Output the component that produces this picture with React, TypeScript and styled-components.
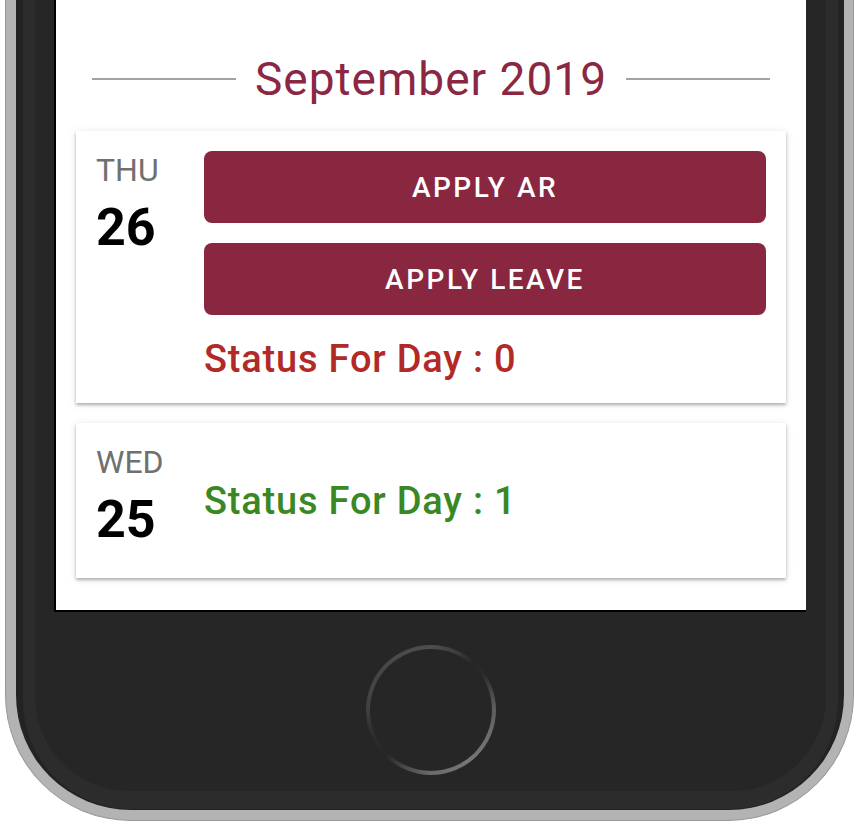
import React from "react";
import styled, { createGlobalStyle } from "styled-components";

const GlobalStyle = createGlobalStyle`
  html, body {
    margin: 0;
    padding: 0;
    background: #ffffff;
    font-family: Roboto, "Liberation Sans", Arial, sans-serif;
  }
  * { box-sizing: border-box; }
`;

const Shell = styled.div`
  margin: 0 2px 0 5px;
  background: #b3b3b3;
  border: 1px solid #979797;
  border-top: none;
  border-radius: 0 0 126px 126px;
  padding: 0 9px 10px 10px;
`;

const Body = styled.div`
  background: #232323;
  border-radius: 0 0 115px 115px;
  padding: 0 6px 1px 7px;
`;

const Bezel = styled.div`
  background: #2c2c2c;
  border-radius: 0 0 108px 108px;
  padding: 0 12px 18px 12px;
`;

const Inner = styled.div`
  background: #262626;
  border-radius: 0 0 94px 94px;
  display: flex;
  flex-direction: column;
`;

const Screen = styled.div`
  margin: 0 20px 0 19px;
  background: #ffffff;
  border-left: 2px solid #000;
  border-bottom: 2px solid #000;
  padding: 53px 20px 32px;
  display: flex;
  flex-direction: column;
`;

const Header = styled.div`
  display: flex;
  align-items: center;
  gap: 19px;
  padding: 0 16px;
  margin-bottom: 26px;
`;

const Rule = styled.div`
  flex: 1;
  height: 2px;
  background: #a3a3a3;
`;

const Title = styled.div`
  font-size: 46px;
  line-height: 52px;
  letter-spacing: 1px;
  font-weight: 400;
  color: #8b2742;
  white-space: nowrap;
`;

const Card = styled.div<{ $center?: boolean }>`
  background: #fff;
  display: flex;
  align-items: ${(p) => (p.$center ? "center" : "flex-start")};
  padding: 20px;
  box-shadow: 0 2px 3px rgba(0, 0, 0, 0.28), 0 1px 9px rgba(0, 0, 0, 0.09);
  & + & {
    margin-top: 20px;
  }
`;

const DateCol = styled.div`
  width: 108px;
  flex: none;
  display: flex;
  flex-direction: column;
  padding-bottom: 7px;
`;

const DayName = styled.div`
  font-size: 32px;
  line-height: 38px;
  color: #707070;
  font-weight: 400;
`;

const DayNum = styled.div`
  font-size: 52px;
  line-height: 62px;
  margin-top: 8px;
  font-weight: 700;
  color: #000;
`;

const Actions = styled.div`
  flex: 1;
  display: flex;
  flex-direction: column;
  gap: 20px;
`;

const ActionButton = styled.button`
  height: 72px;
  width: 100%;
  border: none;
  border-radius: 8px;
  background: #892740;
  color: #fff;
  font-family: Roboto, "Liberation Sans", Arial, sans-serif;
  font-size: 28px;
  font-weight: 500;
  letter-spacing: 2.5px;
  text-transform: uppercase;
  cursor: pointer;
`;

const Status = styled.div<{ $ok?: boolean }>`
  font-size: 38px;
  line-height: 48px;
  letter-spacing: 0.8px;
  font-weight: 500;
  color: ${(p) => (p.$ok ? "#3a8824" : "#b12a28")};
`;

const HomeArea = styled.div`
  display: flex;
  justify-content: center;
  padding: 33px 0 16px;
`;

const HomeRing = styled.div`
  width: 130px;
  height: 130px;
  border-radius: 50%;
  padding: 4px;
  background: conic-gradient(
    #4e4e4e 0deg,
    #3c3c3c 25deg,
    #262626 42deg,
    #2a2a2a 55deg,
    #5a5a5a 85deg,
    #6e6e6e 115deg,
    #767676 145deg,
    #6a6a6a 180deg,
    #4a4a4a 205deg,
    #262626 225deg,
    #2c2c2c 245deg,
    #424242 275deg,
    #4e4e4e 360deg
  );
`;

const HomeFace = styled.div`
  width: 100%;
  height: 100%;
  border-radius: 50%;
  background: #262626;
`;

type Day = {
  name: string;
  num: number;
  status: number;
  actions: string[];
};

const days: Day[] = [
  { name: "THU", num: 26, status: 0, actions: ["Apply AR", "Apply Leave"] },
  { name: "WED", num: 25, status: 1, actions: [] },
];

export default function App() {
  return (
    <>
      <GlobalStyle />
      <Shell>
        <Body>
          <Bezel>
            <Inner>
              <Screen>
                <Header>
                  <Rule />
                  <Title>September 2019</Title>
                  <Rule />
                </Header>
                {days.map((d) => (
                  <Card key={d.num} $center={d.actions.length === 0}>
                    <DateCol>
                      <DayName>{d.name}</DayName>
                      <DayNum>{d.num}</DayNum>
                    </DateCol>
                    <Actions>
                      {d.actions.map((a) => (
                        <ActionButton key={a}>{a}</ActionButton>
                      ))}
                      <Status $ok={d.status === 1}>Status For Day : {d.status}</Status>
                    </Actions>
                  </Card>
                ))}
              </Screen>
              <HomeArea>
                <HomeRing>
                  <HomeFace />
                </HomeRing>
              </HomeArea>
            </Inner>
          </Bezel>
        </Body>
      </Shell>
    </>
  );
}
